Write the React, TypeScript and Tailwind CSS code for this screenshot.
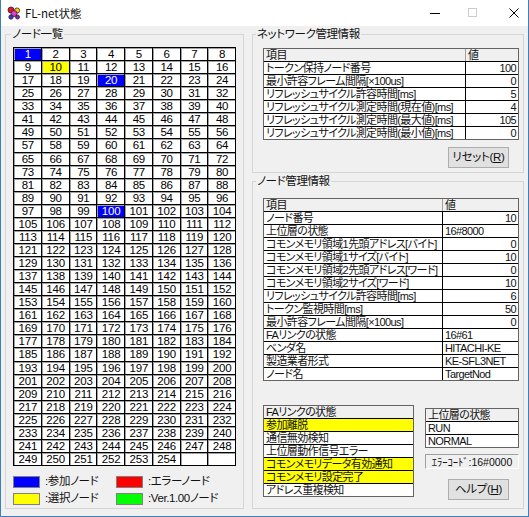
import React from "react";

type Row = { label: string; value: string; align?: "left" | "right" };

const netRows: Row[] = [
  { label: "トークン保持ノード番号", value: "100" },
  { label: "最小許容フレーム間隔[×100us]", value: "0" },
  { label: "リフレッシュサイクル許容時間[ms]", value: "5" },
  { label: "リフレッシュサイクル測定時間(現在値)[ms]", value: "4" },
  { label: "リフレッシュサイクル測定時間(最大値)[ms]", value: "105" },
  { label: "リフレッシュサイクル測定時間(最小値)[ms]", value: "0" },
];

const nodeRows: Row[] = [
  { label: "ノード番号", value: "10" },
  { label: "上位層の状態", value: "16#8000", align: "left" },
  { label: "コモンメモリ領域1先頭アドレス[バイト]", value: "0" },
  { label: "コモンメモリ領域1サイズ[バイト]", value: "10" },
  { label: "コモンメモリ領域2先頭アドレス[ワード]", value: "0" },
  { label: "コモンメモリ領域2サイズ[ワード]", value: "10" },
  { label: "リフレッシュサイクル許容時間[ms]", value: "6" },
  { label: "トークン監視時間[ms]", value: "50" },
  { label: "最小許容フレーム間隔[×100us]", value: "0" },
  { label: "FAリンクの状態", value: "16#61", align: "left" },
  { label: "ベンダ名", value: "HITACHI-KE", align: "left" },
  { label: "製造業者形式", value: "KE-SFL3NET", align: "left" },
  { label: "ノード名", value: "TargetNod", align: "left" },
];

const faRows: { label: string; on: boolean }[] = [
  { label: "参加離脱", on: true },
  { label: "通信無効検知", on: false },
  { label: "上位層動作信号エラー", on: false },
  { label: "コモンメモリデータ有効通知", on: true },
  { label: "コモンメモリ設定完了", on: true },
  { label: "アドレス重複検知", on: false },
];

function cellClass(n: number): string {
  if (n === 1 || n === 20 || n === 100) return "bg-[#0000ff] text-white";
  if (n === 10) return "bg-[#ffff00] text-black";
  return "bg-white text-black";
}

function AppIcon() {
  return (
    <svg width="14" height="14" viewBox="0 0 14 14" className="ml-[6px] shrink-0">
      <circle cx="4" cy="4" r="3" fill="#d81b1b" stroke="#3a1a3a" strokeWidth="0.8" />
      <circle cx="10" cy="4.5" r="2.6" fill="#f5d000" stroke="#3a1a3a" strokeWidth="0.8" />
      <circle cx="7" cy="7.5" r="3" fill="#e040c8" stroke="#3a1a3a" strokeWidth="0.8" />
      <circle cx="4" cy="11" r="2.2" fill="#2b3fd0" stroke="#3a1a3a" strokeWidth="0.8" />
      <circle cx="10.5" cy="11" r="2" fill="#7a2aa0" stroke="#3a1a3a" strokeWidth="0.8" />
    </svg>
  );
}

function WinButton({ children }: { children: React.ReactNode }) {
  return (
    <div className="w-[61px] h-[21px] bg-[#e1e1e1] border border-[#adadad] flex items-center justify-center text-[11.5px] leading-[13px] tracking-[-0.3px]">
      {children}
    </div>
  );
}

export default function App() {
  const cells = Array.from({ length: 256 }, (_, i) => i + 1);
  return (
    <div className="w-[529px] h-[517px] bg-[#f0f0f0] border-x border-b border-[#3c7fc1] flex flex-col text-[11px] leading-[13px] tracking-[-0.6px] text-[#111] font-['Liberation_Sans','Noto_Sans_CJK_JP',sans-serif] [font-feature-settings:'palt'] overflow-hidden">
      {/* Title bar */}
      <div className="h-[26px] bg-white flex items-center shrink-0">
        <AppIcon />
        <span className="ml-[4px] text-[11.5px] leading-[14px] tracking-[0px] font-['Noto_Sans_CJK_JP','Liberation_Sans',sans-serif]">FL-net状態</span>
        <div className="ml-auto flex items-center mr-[9px]">
          <svg width="10" height="10" viewBox="0 0 10 10">
            <line x1="0" y1="5.5" x2="10" y2="5.5" stroke="#000" strokeWidth="1" />
          </svg>
          <svg width="10" height="10" viewBox="0 0 10 10" className="ml-[28px]">
            <rect x="0.5" y="0.5" width="8" height="8" fill="none" stroke="#cccccc" strokeWidth="1" />
          </svg>
          <svg width="10" height="10" viewBox="0 0 10 10" className="ml-[31px]">
            <line x1="0.5" y1="0.5" x2="9.5" y2="9.5" stroke="#000" strokeWidth="1" />
            <line x1="9.5" y1="0.5" x2="0.5" y2="9.5" stroke="#000" strokeWidth="1" />
          </svg>
        </div>
      </div>

      {/* Body */}
      <div className="flex flex-1 pt-px pl-[4px] gap-[8px]">
        {/* Node list */}
        <fieldset className="w-[239px] h-[482px] border border-[#d5d5d5] p-0 m-0 min-w-0">
          <legend className="ml-[5px] px-px h-[14px] leading-[14px] text-[11.5px] tracking-[-0.3px]">ノード一覧</legend>
          <div className="pl-[7px] pt-[6px]">
            <div className="w-[223px] h-[419px] bg-black p-px grid grid-cols-8 grid-rows-32 gap-px">
              {cells.map((n) => (
                <div
                  key={n}
                  className={`border-t border-l border-[#a0a0a0] flex items-center justify-center text-[11.5px] leading-[11px] tracking-[-0.2px] ${n > 254 ? "bg-white" : cellClass(n)}`}
                >
                  {n > 254 ? "" : n}
                </div>
              ))}
            </div>
            <div className="mt-[9px] grid grid-cols-[103px_auto] gap-y-[4px] text-[11.5px] tracking-[-0.4px]">
              <div className="flex items-center">
                <div className="w-[27px] h-[12px] bg-[#0000ff] border border-[#808080]" />
                <span className="ml-[5px]">:参加ノード</span>
              </div>
              <div className="flex items-center">
                <div className="w-[27px] h-[12px] bg-[#ff0000] border border-[#808080]" />
                <span className="ml-[5px]">:エラーノード</span>
              </div>
              <div className="flex items-center">
                <div className="w-[27px] h-[12px] bg-[#ffff00] border border-[#808080]" />
                <span className="ml-[5px]">:選択ノード</span>
              </div>
              <div className="flex items-center">
                <div className="w-[27px] h-[12px] bg-[#00ff00] border border-[#808080]" />
                <span className="ml-[5px]">:Ver.1.00ノード</span>
              </div>
            </div>
          </div>
        </fieldset>

        {/* Right column */}
        <div className="w-[272px] flex flex-col">
          <fieldset className="h-[146px] border border-[#d5d5d5] p-0 m-0 min-w-0">
            <legend className="ml-[3px] px-px h-[14px] leading-[14px] text-[11.5px] tracking-[-0.4px]">ネットワーク管理情報</legend>
            <div className="pl-[10px] pt-[7px]">
              <div className="w-[256px] border border-[#646464] bg-white">
                <div className="flex h-[12px] bg-[#f0f0f0]">
                  <div className="w-[202px] border-r border-[#a0a0a0] pl-[2px] leading-[12px]">項目</div>
                  <div className="flex-1 pl-[2px] leading-[12px]">値</div>
                </div>
                {netRows.map((r) => (
                  <div key={r.label} className="flex h-[13px] border-t border-black">
                    <div className="w-[202px] border-r border-black pl-[2px] leading-[12px] whitespace-nowrap overflow-hidden">{r.label}</div>
                    <div className="flex-1 pr-[2px] text-right leading-[12px]">{r.value}</div>
                  </div>
                ))}
              </div>
              <div className="ml-[185px] mt-[7px]">
                <WinButton>
                  <span>
                    リセット(<span className="underline">R</span>)
                  </span>
                </WinButton>
              </div>
            </div>
          </fieldset>

          <fieldset className="mt-px h-[335px] border border-[#d5d5d5] p-0 m-0 min-w-0">
            <legend className="ml-[3px] px-px h-[14px] leading-[14px] text-[11.5px] tracking-[-0.4px]">ノード管理情報</legend>
            <div className="pl-[10px] pt-[10px]">
              <div className="w-[256px] border border-[#646464] bg-white">
                <div className="flex h-[12px] bg-[#f0f0f0]">
                  <div className="w-[179px] border-r border-[#a0a0a0] pl-[2px] leading-[12px]">項目</div>
                  <div className="flex-1 pl-[2px] leading-[12px]">値</div>
                </div>
                {nodeRows.map((r) => (
                  <div key={r.label + r.value} className="flex h-[13px] border-t border-black">
                    <div className="w-[179px] border-r border-black pl-[2px] leading-[12px] whitespace-nowrap overflow-hidden">{r.label}</div>
                    <div
                      className={
                        r.align === "left"
                          ? "flex-1 pl-[2px] text-left leading-[12px] whitespace-nowrap overflow-hidden"
                          : "flex-1 pr-[2px] text-right leading-[12px]"
                      }
                    >
                      {r.value}
                    </div>
                  </div>
                ))}
              </div>

              <div className="mt-[24px] flex items-start gap-[11px]">
                <div className="w-[151px] border border-[#646464] bg-white">
                  <div className="h-[12px] bg-[#f0f0f0] pl-[2px] leading-[12px]">FAリンクの状態</div>
                  {faRows.map((r) => (
                    <div
                      key={r.label}
                      className={`h-[13px] border-t border-black pl-[2px] leading-[12px] whitespace-nowrap ${r.on ? "bg-[#ffff00]" : "bg-white"}`}
                    >
                      {r.label}
                    </div>
                  ))}
                </div>
                <div className="w-[94px] flex flex-col mt-[3px]">
                  <div className="border border-[#646464] bg-white">
                    <div className="h-[12px] bg-[#f0f0f0] pl-[2px] leading-[12px]">上位層の状態</div>
                    <div className="h-[13px] border-t border-black pl-[2px] leading-[12px]">RUN</div>
                    <div className="h-[13px] border-t border-black pl-[2px] leading-[12px]">NORMAL</div>
                  </div>
                  <div className="mt-[6px] h-[15px] border-t border-l border-[#a0a0a0] border-b-white border-r-white border-b border-r flex items-center justify-center text-[10.5px] leading-[12px] tracking-[0px]">
                    ｴﾗｰｺｰﾄﾞ:16#0000
                  </div>
                  <div className="mt-[10px] ml-[23px]">
                    <WinButton>
                      <span>
                        ヘルプ(<span className="underline">H</span>)
                      </span>
                    </WinButton>
                  </div>
                </div>
              </div>
            </div>
          </fieldset>
        </div>
      </div>
    </div>
  );
}
